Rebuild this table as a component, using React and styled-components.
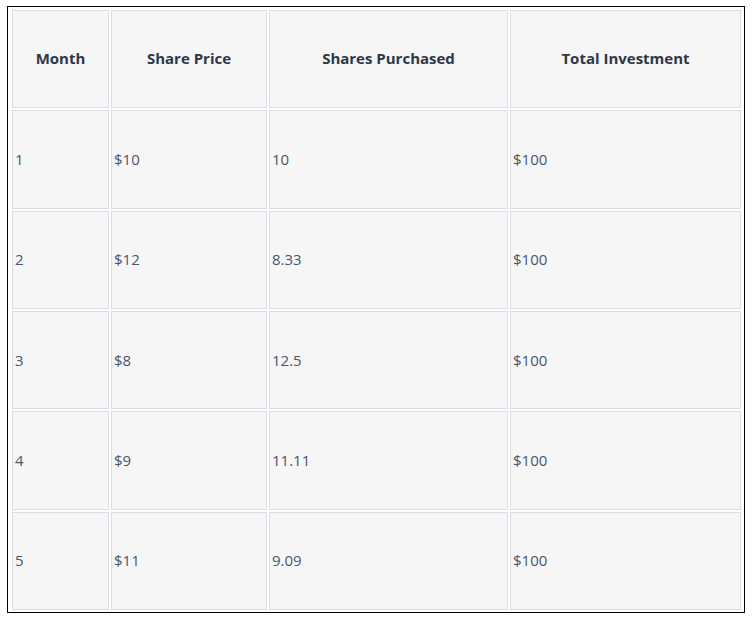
import React from 'react';
import styled, { createGlobalStyle } from 'styled-components';

const GlobalStyle = createGlobalStyle`
  body {
    margin: 0;
    background: #ffffff;
    font-family: "Open Sans", "Noto Sans", sans-serif;
  }
`;

const rows = [
  { month: '1', price: '$10', shares: '10', total: '$100' },
  { month: '2', price: '$12', shares: '8.33', total: '$100' },
  { month: '3', price: '$8', shares: '12.5', total: '$100' },
  { month: '4', price: '$9', shares: '11.11', total: '$100' },
  { month: '5', price: '$11', shares: '9.09', total: '$100' },
];

const columns = [
  { key: 'month', label: 'Month', width: 97 },
  { key: 'price', label: 'Share Price', width: 156 },
  { key: 'shares', label: 'Shares Purchased', width: 239 },
  { key: 'total', label: 'Total Investment', width: 231 },
];

function App() {
  return (
    <>
      <GlobalStyle />
      <Page>
        <Frame>
          <Table>
            <colgroup>
              {columns.map((col) => (
                <col key={col.key} style={{ width: col.width }} />
              ))}
            </colgroup>
            <thead>
              <tr>
                {columns.map((col) => (
                  <HeadCell key={col.key}>{col.label}</HeadCell>
                ))}
              </tr>
            </thead>
            <tbody>
              {rows.map((row, i) => (
                <tr key={i}>
                  {columns.map((col) => (
                    <Cell key={col.key}>{row[col.key]}</Cell>
                  ))}
                </tr>
              ))}
            </tbody>
          </Table>
        </Frame>
      </Page>
    </>
  );
}

export default App;

const Page = styled.div`
  padding: 6px 0 0 7px;
`;

const Frame = styled.div`
  width: 733px;
  border: 1px solid #000000;
  padding: 1px 1px 0 2px;
  box-sizing: content-box;
`;

const Table = styled.table`
  border-collapse: separate;
  border-spacing: 2px;
  table-layout: fixed;
  width: 733px;
`;

const HeadCell = styled.th`
  height: 98.33px;
  box-sizing: border-box;
  padding: 0 2px 3px;
  border: 1px solid #dcdbe7;
  background: #f6f6f7;
  color: #2d3748;
  font-size: 15px;
  font-weight: 700;
  text-align: center;
  vertical-align: middle;
`;

const Cell = styled.td`
  height: 98.33px;
  box-sizing: border-box;
  padding: 0 2px 1px;
  border: 1px solid #dcdbe7;
  background: #f6f6f7;
  color: #4a5568;
  font-size: 15px;
  text-align: left;
  vertical-align: middle;
`;
